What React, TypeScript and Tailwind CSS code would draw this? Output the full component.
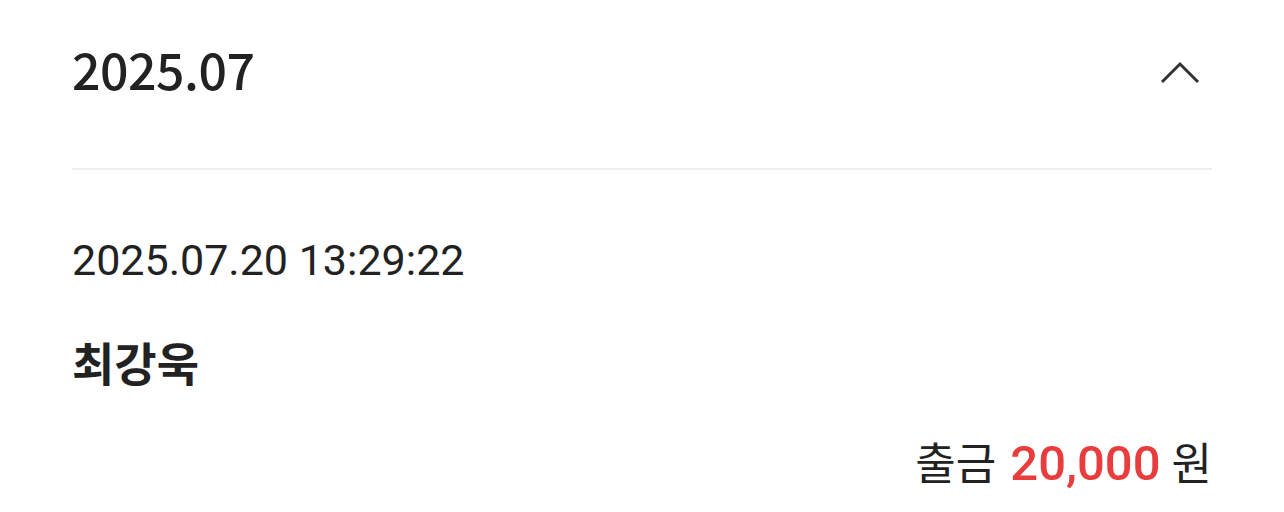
export default function App() {
  return (
    <div className="w-[1284px] h-[512px] bg-white overflow-hidden px-[72px] text-[#222222]">
      <div className="flex items-center justify-between h-[168px] pb-[31px]">
        <div
          className="text-[50px] font-medium tracking-[-0.5px]"
          style={{ fontFamily: '"Noto Sans CJK KR", sans-serif' }}
        >
          2025.07
        </div>
        <svg width="40" height="24" viewBox="0 0 40 24" className="mr-[12px] mt-[7px]" fill="none">
          <path d="M2 22 L20 4 L38 22" stroke="#333333" strokeWidth="3" />
        </svg>
      </div>
      <div className="h-[2px] bg-[#eceef0]" />
      <div className="pt-[62px]" style={{ fontFamily: 'Roboto, "Noto Sans CJK KR", sans-serif' }}>
        <div className="text-[43px] leading-[56px]">2025.07.20 13:29:22</div>
        <div
          className="mt-[45px] text-[46px] font-bold leading-[56px]"
          style={{ fontFamily: '"Noto Sans CJK KR", sans-serif' }}
        >
          최강욱
        </div>
        <div className="mt-[44px] flex items-baseline justify-end leading-[56px]">
          <span className="text-[44px]" style={{ fontFamily: '"Noto Sans CJK KR", sans-serif' }}>
            출금
          </span>
          <span className="ml-[14px] text-[49px] font-medium text-[#e93d3d]">20,000</span>
          <span className="ml-[11px] text-[44px]" style={{ fontFamily: '"Noto Sans CJK KR", sans-serif' }}>
            원
          </span>
        </div>
      </div>
    </div>
  );
}
